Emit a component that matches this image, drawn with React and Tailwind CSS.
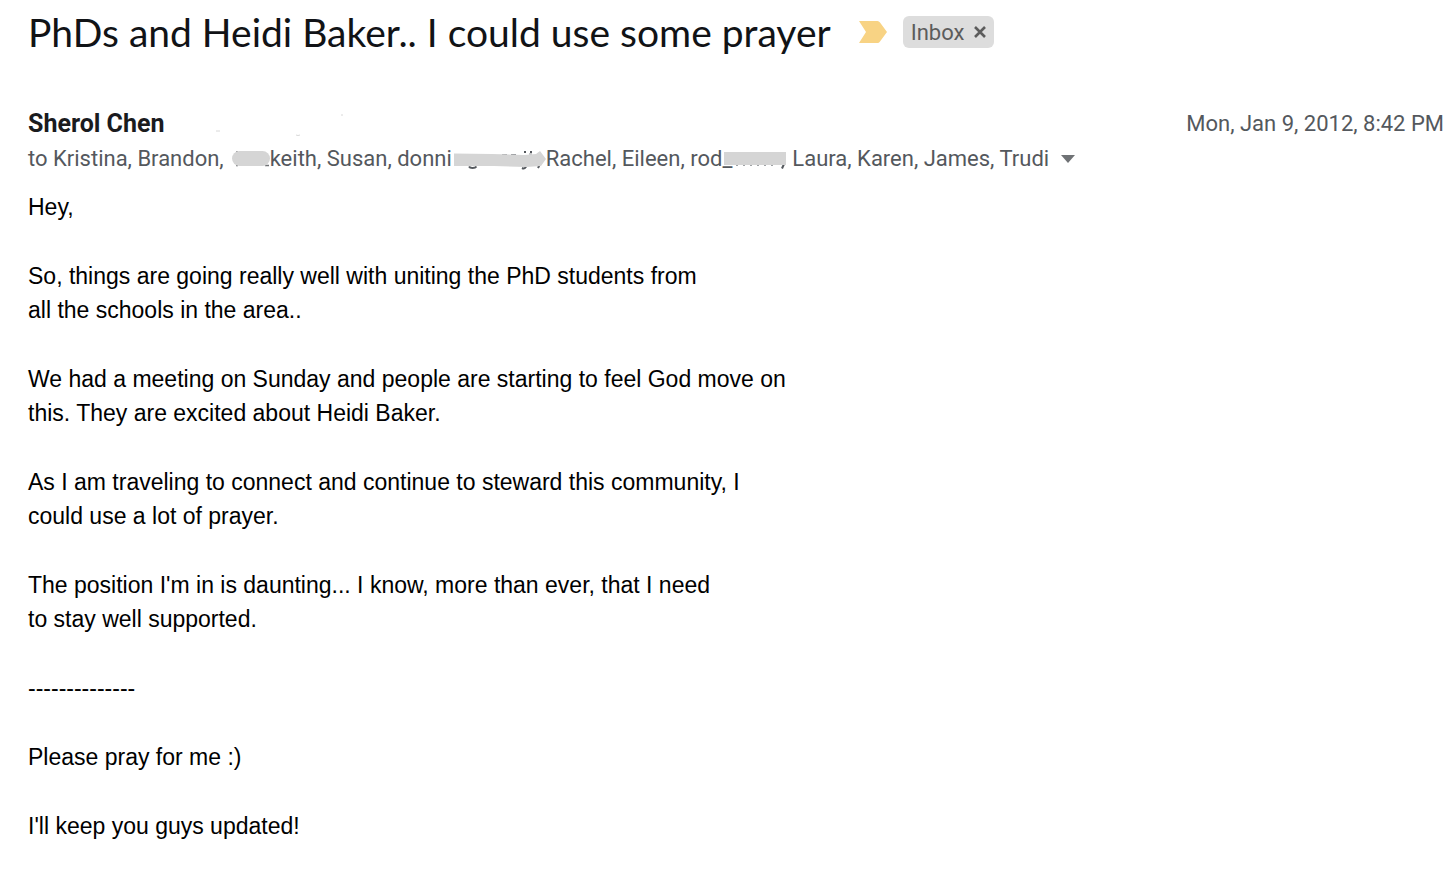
const paragraphs = [
    ['Hey,'],
    ['So, things are going really well with uniting the PhD students from', 'all the schools in the area..'],
    ['We had a meeting on Sunday and people are starting to feel God move on', 'this. They are excited about Heidi Baker.'],
    ['As I am traveling to connect and continue to steward this community, I', 'could use a lot of prayer.'],
    ["The position I'm in is daunting... I know, more than ever, that I need", 'to stay well supported.'],
    ['--------------'],
    ['Please pray for me :)'],
    ["I'll keep you guys updated!"],
];

// Smudges over the hidden parts of the recipient list
const RoundSmudge = () => (
    <svg width="38" height="24" viewBox="0 0 38 24" className="shrink-0" aria-hidden="true">
        <path d="M4 5h2M4 18.500h2M33 18.500h4" stroke="#6f7275" strokeWidth="1.500" />
        <rect x="0" y="4" width="38" height="15" rx="7.500" fill="#d5d5d5" />
    </svg>
);

const ArrowSmudge = () => (
    <svg width="92" height="24" viewBox="0 0 92 24" className="shrink-0" aria-hidden="true">
        <path d="M48 7.500h5M57 7.500h5M75 7h3" stroke="#8a8d91" strokeWidth="1" />
        <path d="M70 5h2M76 5h2" stroke="#54585d" strokeWidth="2" />
        <path d="M15 19.500c1 2 6 2 7.500 0M68 21c2 1 4 0 4-2M86 17l-2 4" fill="none" stroke="#54585d" strokeWidth="2" />
        <path d="M0 6.500 38 7 70 8l12-1 4-3 6 8-5 7-15 1-32-1H0z" fill="#d5d5d5" />
    </svg>
);

const BoxSmudge = () => (
    <svg width="62" height="24" viewBox="0 0 62 24" className="relative -ml-2 shrink-0" aria-hidden="true">
        <path d="M60 17l-2 4.500" stroke="#54585d" strokeWidth="2" />
        <path d="M12 18.500h42" stroke="#a0a3a6" strokeWidth="1" strokeDasharray="2 5" />
        <rect x="0" y="5" width="62" height="13" fill="#d5d5d5" />
    </svg>
);

const App = () => {
    return (
        <main className="bg-white pl-7 pr-3 pt-1 pb-9 font-['Roboto',sans-serif]">
            {/* Subject */}
            <header className="flex items-center">
                <h1 className="text-[39px] leading-[56px] text-[#111316] whitespace-nowrap font-['Lato',sans-serif]">
                    PhDs and Heidi Baker.. I could use some prayer
                </h1>
                <button type="button" aria-label="Important" className="ml-7 shrink-0">
                    <svg width="28" height="22" viewBox="0 0 28 22" aria-hidden="true">
                        <path d="M0 0h18.500q1.500 0 2.500 1.500L28 11l-7 9.500q-1 1.500-2.500 1.500H0l7-11z" fill="#f8d384" />
                    </svg>
                </button>
                <div className="ml-4 flex h-8 items-center gap-2.5 rounded-md bg-[#dddddd] px-2 text-[22px] text-[#5c5c5c]">
                    <span>Inbox</span>
                    <button type="button" aria-label="Remove label Inbox">
                        <svg width="12" height="12" viewBox="0 0 12 12" aria-hidden="true">
                            <path d="M1 1l10 10M11 1L1 11" stroke="#5c5c5c" strokeWidth="2.600" />
                        </svg>
                    </button>
                </div>
            </header>

            {/* Sender and date */}
            <div className="mt-12 flex items-center justify-between">
                <div className="flex items-center">
                    <h2 className="text-[25px] leading-8 font-bold text-[#1a1b1e]">Sherol Chen</h2>
                    <svg width="180" height="24" viewBox="0 0 180 24" aria-hidden="true">
                        <path d="M51 19h4M131 23q2 1 4 0M176 3h2" fill="none" stroke="#d8d8d8" strokeWidth="1" />
                    </svg>
                </div>
                <time className="text-[22px] leading-8 text-[#54585d]" dateTime="2012-01-09T20:42">
                    Mon, Jan 9, 2012, 8:42 PM
                </time>
            </div>

            {/* Recipients */}
            <div className="mt-[5px] flex items-center text-[22px] leading-7 whitespace-nowrap text-[#54585d]">
                <span className="mr-2">to Kristina, Brandon,</span>
                <RoundSmudge />
                <span className="mr-0.5">keith, Susan, donni</span>
                <ArrowSmudge />
                <span>Rachel, Eileen, rod_</span>
                <BoxSmudge />
                <span className="ml-1.5">Laura, Karen, James, Trudi</span>
                <button type="button" aria-label="Show details" className="ml-3">
                    <svg width="14" height="8" viewBox="0 0 14 8" aria-hidden="true">
                        <path d="M0 0h14L7 8z" fill="#6f7275" />
                    </svg>
                </button>
            </div>

            {/* Message */}
            <article className="mt-[17px] flex flex-col gap-[35px] text-[23px] leading-[34px] text-black font-['Liberation_Sans',Arial,sans-serif]">
                {paragraphs.map((lines) => (
                    <p key={lines[0]}>
                        {lines.map((line) => (
                            <span key={line} className="block">{line}</span>
                        ))}
                    </p>
                ))}
            </article>
        </main>
    );
};

export default App;
